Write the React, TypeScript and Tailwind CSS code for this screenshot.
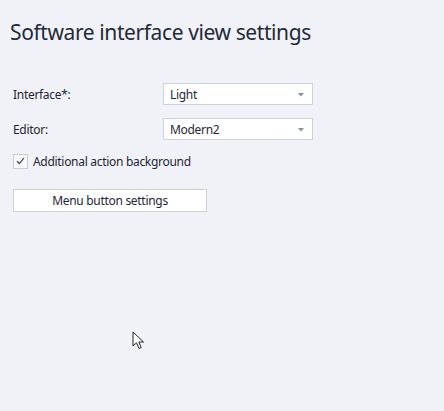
import React from "react";

const font = { fontFamily: "'Noto Sans', 'DejaVu Sans', sans-serif" };

function Select({ value }: { value: string }) {
  return (
    <div className="flex h-[22px] w-[150px] items-center justify-between border border-[#cdd1da] bg-white pl-[6px] pr-[8px] text-[12px] tracking-[-0.3px] text-[#1f2535]">
      <span className="pt-[2px]">{value}</span>
      <svg width="6" height="4" viewBox="0 0 6 4" className="mt-[1px]">
        <path d="M0 0 H6 L3 3.5 Z" fill="#8a8f99" />
      </svg>
    </div>
  );
}

function Cursor() {
  return (
    <svg width="14" height="20" viewBox="0 0 14 20" className="absolute left-[132px] top-[331px]">
      <path
        d="M1 1 L1 15 L4.5 11.8 L7 17.5 L9.2 16.5 L6.8 11 L11.5 11 Z"
        fill="white"
        stroke="#222"
        strokeWidth="1"
        strokeLinejoin="round"
      />
    </svg>
  );
}

export default function App() {
  return (
    <div className="relative h-[411px] w-[444px] overflow-hidden bg-[#f1f2f7] text-[#1f2535]" style={font}>
      <h1 className="pl-[10px] pt-[18px] text-[21px] leading-[28px] tracking-[-0.4px] text-[#222a3a]">
        Software interface view settings
      </h1>
      <div className="mt-[37px] flex flex-col pl-[13px] text-[12px] tracking-[-0.3px]">
        <div className="flex h-[22px] items-center">
          <span className="w-[150px] pt-[2px]">Interface*:</span>
          <Select value="Light" />
        </div>
        <div className="mt-[13px] flex h-[22px] items-center">
          <span className="w-[150px] pt-[2px]">Editor:</span>
          <Select value="Modern2" />
        </div>
        <label className="mt-[13px] flex h-[16px] items-center gap-[5px]">
          <span className="flex h-[15px] w-[15px] items-center justify-center border border-[#c9ccd3] bg-[#f7f8fa]">
            <svg width="9" height="8" viewBox="0 0 9 8">
              <path d="M1 4.2 L3.3 6.7 L8 1" fill="none" stroke="#333" strokeWidth="1.1" />
            </svg>
          </span>
          <span className="pt-[1px]">Additional action background</span>
        </label>
        <button className="mt-[20px] h-[23px] w-[194px] border border-[#cdd1da] bg-white text-center text-[12px] tracking-[-0.3px] text-[#1f2535]">
          Menu button settings
        </button>
      </div>
      <Cursor />
    </div>
  );
}
